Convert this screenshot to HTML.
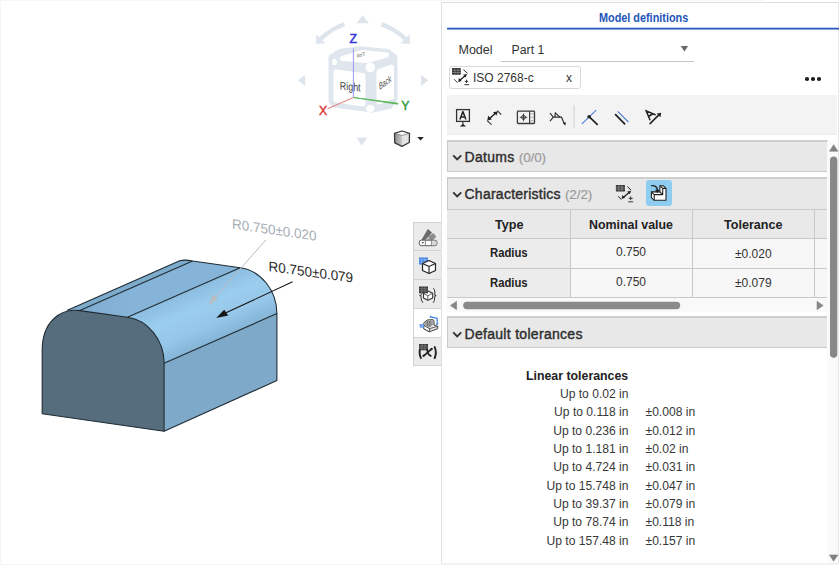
<!DOCTYPE html>
<html><head><meta charset="utf-8">
<style>
*{margin:0;padding:0;box-sizing:border-box}
html,body{width:839px;height:565px;overflow:hidden;background:#fff;font-family:"Liberation Sans",sans-serif;color:#333}
.abs{position:absolute}
#panel{position:absolute;left:441px;top:2px;width:398px;height:563px;border-left:1px solid #e0e0e0;border-top:1px solid #dedede;border-right:1px solid #e8e8e8;background:#fff}
.t{position:absolute;white-space:nowrap;line-height:1}
.hdr{position:absolute;left:447px;width:381px;background:#e8e8e8;border:1px solid #c9c9c9;border-top:2px solid #cecece}
.col{position:absolute;background:#c9c9c9;width:1px}
.row{position:absolute;background:#c9c9c9;height:1px}
.hd{font-size:14px;color:#2e2e2e;-webkit-text-stroke:0.4px #2e2e2e}
.cnt{color:#9a9a9a;-webkit-text-stroke:0.15px #9a9a9a;letter-spacing:-0.1px;font-size:13.5px}
</style></head><body>

<div class="abs" style="left:0;top:0;width:763px;height:1px;background:#f6f6f6"></div>
<div class="abs" style="left:0;top:0;width:1px;height:565px;background:#f6f6f6"></div>
<div class="abs" style="left:0;top:564px;width:441px;height:1px;background:#f6f6f6"></div>
<!-- viewport: 3D model -->
<svg class="abs" style="left:0;top:0" width="440" height="565" viewBox="0 0 440 565">
  <defs>
    <linearGradient id="gf" gradientUnits="userSpaceOnUse" x1="127.4" y1="317.3" x2="150.3" y2="369.3">
      <stop offset="0" stop-color="#8cbde1"/>
      <stop offset="0.35" stop-color="#9bcdee"/>
      <stop offset="0.7" stop-color="#96c7e9"/>
      <stop offset="1" stop-color="#84b4d6"/>
    </linearGradient>
    <linearGradient id="gt" gradientUnits="userSpaceOnUse" x1="79.8" y1="310.6" x2="127.4" y2="317.3">
      <stop offset="0" stop-color="#7eaacd"/>
      <stop offset="1" stop-color="#86b4d8"/>
    </linearGradient>
  </defs>
  <!-- right side face -->
  <polygon points="164.1,363.2 276.9,313.6 276.9,380.5 164.1,431.3" fill="#7fa9c8"/>
  <!-- left fillet strip -->
  <path d="M66.9,310.4 L179.7,260.8 Q185,259.3 192.6,261 L79.8,310.6 Z" fill="#7dabcc"/>
  <!-- flat top -->
  <path d="M79.8,310.6 L192.6,261 L240.2,267.7 L127.4,317.3 Z" fill="url(#gt)"/>
  <!-- right fillet -->
  <path d="M127.4,317.3 L240.2,267.7 C260.8,270.5 276.9,290.4 276.9,313.6 L164.1,363.2 C164.1,340 148,320 127.4,317.3 Z" fill="url(#gf)"/>
  <!-- front face -->
  <path d="M42.2,413.8 L164.1,431.3 L164.1,363.2 C164.1,340 148,320 127.4,317.3 L79.8,310.6 C60,308 42.2,322 42.2,350 Z" fill="#566d7d"/>
  <!-- edges -->
  <g stroke="#1f2b33" stroke-width="1.1" fill="none" stroke-linejoin="round">
    <path d="M42.2,413.8 L164.1,431.3 L164.1,363.2 C164.1,340 148,320 127.4,317.3 L79.8,310.6 C60,308 42.2,322 42.2,350 Z"/>
    <path d="M164.1,431.3 L276.9,380.5 L276.9,313.6 L164.1,363.2"/>
    <path d="M66.9,310.4 L179.7,260.8 Q185,259.3 192.6,261 L240.2,267.7 C260.8,270.5 276.9,290.4 276.9,313.6"/>
    <line x1="79.8" y1="310.6" x2="192.6" y2="261"/>
    <line x1="127.4" y1="317.3" x2="240.2" y2="267.7"/>
  </g>
  <!-- dimension annotations -->
  <line x1="265.9" y1="240" x2="215.3" y2="296.8" stroke="#b9bcbf" stroke-width="1"/>
  <polygon points="208.1,305.5 213,294.6 218,298.8" fill="#b9bcbf"/>
  <line x1="292.6" y1="281.8" x2="226" y2="312.8" stroke="#151515" stroke-width="1.1"/>
  <polygon points="216.2,317.9 224.2,309.8 228.2,315.6" fill="#151515"/>
  <text x="0" y="0" transform="translate(232 228.6) skewY(8.2)" font-family="Liberation Sans" font-size="13.8" fill="#a6aeb6" textLength="84.5" lengthAdjust="spacingAndGlyphs">R0.750±0.020</text>
  <text x="0" y="0" transform="translate(268.6 271) skewY(7.8)" font-family="Liberation Sans" font-size="13.8" fill="#2a2a2a" textLength="84.5" lengthAdjust="spacingAndGlyphs">R0.750±0.079</text>
</svg>

<!-- view cube -->
<svg class="abs" style="left:290px;top:5px" width="150" height="150" viewBox="290 5 150 150">
  <g fill="#dde4eb" stroke="none">
    <polygon points="362.7,15.2 356.5,23.3 368.9,23.3"/>
    <polygon points="298,80.2 305.2,75 305.2,86"/>
    <polygon points="428.3,80.2 421,75 421,86"/>
    <polygon points="361.7,145.5 356.3,137.5 367.5,137.5"/>
    <polygon points="316,43.8 316.4,34.5 325.5,43.4"/>
    <polygon points="410,43.8 409.6,34.5 400.5,43.4"/>
  </g>
  <path d="M344.5,24.3 Q331,29 320.5,39" fill="none" stroke="#dde4eb" stroke-width="4.2"/>
  <path d="M381.5,24.3 Q395,29 405.5,39" fill="none" stroke="#dde4eb" stroke-width="4.2"/>
  <!-- cube body -->
  <polygon points="331.5,57 340,52 359.6,49.3 388,52 394.5,57.5 394.5,99 389.5,106 372.4,109.5 334,104.5 331.5,101" fill="#dfe6ed" stroke="#dfe6ed" stroke-width="6" stroke-linejoin="round"/>
  <!-- white panels -->
  <g fill="#fff" stroke="#fff" stroke-width="5" stroke-linejoin="round">
    <polygon points="336,72 363,75.5 363,104 336,100"/>
    <polygon points="379,71.5 391.5,67 391.5,97 379,102"/>
    <polygon points="342.5,58.5 362.5,52.5 386.5,55 367,60.5"/>
  </g>
  <ellipse cx="370.3" cy="67.5" rx="4.8" ry="5" fill="#fff"/>
  <ellipse cx="370.3" cy="108.5" rx="4.5" ry="3.5" fill="#fff"/>
  <ellipse cx="334.5" cy="62" rx="2.3" ry="3.2" fill="#fff"/>
  <text x="0" y="0" font-family="Liberation Sans" font-size="11.2" fill="#3c3c3c" transform="translate(339.8 89.4) skewY(6)" textLength="20.8" lengthAdjust="spacingAndGlyphs">Right</text>
  <text x="0" y="0" font-family="Liberation Sans" font-size="9.5" fill="#4a4a4a" transform="translate(379.5 90) matrix(0.85,-0.62,0.12,1,0,0)" textLength="14" lengthAdjust="spacingAndGlyphs">Back</text>
  <text x="0" y="0" font-family="Liberation Sans" font-size="5" fill="#666" transform="translate(357 57.5) rotate(-12)">doT</text>
  <!-- axes -->
  <line x1="353.4" y1="97.5" x2="353.4" y2="48.5" stroke="#9a9af0" stroke-width="1"/>
  <line x1="353.4" y1="97.5" x2="327.6" y2="108.7" stroke="#e58a8a" stroke-width="1.1"/>
  <path d="M353.4,97.5 L397.8,103.2 L397.8,104.2 Z" fill="#4aa84a" stroke="#5fb85f" stroke-width="0.9"/>
  <text x="349.4" y="43.4" font-family="Liberation Sans" font-size="12.3" fill="#3535d8" stroke="#3535d8" stroke-width="0.45">Z</text>
  <text x="319" y="114.8" font-family="Liberation Sans" font-size="12.3" fill="#d93636" stroke="#d93636" stroke-width="0.45">X</text>
  <text x="401.2" y="109.7" font-family="Liberation Sans" font-size="12.3" fill="#2c9c3a" stroke="#2c9c3a" stroke-width="0.45">Y</text>
  <!-- small cube icon -->
  <defs><linearGradient id="cl" x1="0" y1="0" x2="1" y2="0"><stop offset="0" stop-color="#8d8d8d"/><stop offset="1" stop-color="#c9c9c9"/></linearGradient></defs>
  <polygon points="394.5,133.3 402,135.5 402,146.3 394.7,142.8" fill="url(#cl)"/>
  <polygon points="402,135.5 409.5,133.3 409.3,142.5 402,146.3" fill="#e3e3e3"/>
  <polygon points="394.5,133.3 402,131 409.5,133.3 402,135.5" fill="#fafafa"/>
  <polygon points="394.5,133.3 402,131 409.5,133.3 409.3,142.5 402,146.3 394.7,142.8" fill="none" stroke="#3a3a3a" stroke-width="1.3" stroke-linejoin="round"/>
  <line x1="394.5" y1="133.3" x2="402" y2="135.5" stroke="#555" stroke-width="0.6"/>
  <line x1="409.5" y1="133.3" x2="402" y2="135.5" stroke="#555" stroke-width="0.6"/>
  <polygon points="417.2,137 423.8,137 420.5,140.5" fill="#222"/>
</svg>

<!-- side tool strip -->
<div class="abs" style="left:413px;top:222px;width:29px;height:144px;background:#ebebeb;border:1px solid #d2d2d2;border-right:none"></div>
<div class="abs" style="left:414px;top:309px;width:28px;height:28px;background:#fff"></div>
<div class="row" style="left:414px;top:250px;width:28px;background:#d2d2d2"></div>
<div class="row" style="left:414px;top:279px;width:28px;background:#d2d2d2"></div>
<div class="row" style="left:414px;top:308px;width:28px;background:#d2d2d2"></div>
<div class="row" style="left:414px;top:337px;width:28px;background:#d2d2d2"></div>
<svg class="abs" style="left:413px;top:222px" width="29" height="144" viewBox="0 0 29 144" stroke-linejoin="round">
  <!-- icon1: swatch fan -->
  <path d="M8.4,17.9 L14.8,7.1 L19,10.5 L12.8,17.9 Z" fill="#6a6a6a"/>
  <path d="M13.5,17.9 L16.6,13.6 L20.3,11.1 L23.4,14.8 L19.6,17.9 Z" fill="#8c8c8c"/>
  <path d="M11.6,17.9 L15.6,14.6 L17,17.9 Z" fill="#bdbdbd"/>
  <rect x="6.3" y="18.2" width="17.6" height="5.5" rx="2" fill="#fff" stroke="#5a5a5a" stroke-width="1"/>
  <line x1="12.4" y1="18.2" x2="12.4" y2="23.7" stroke="#777" stroke-width="0.9"/>
  <line x1="18.4" y1="18.2" x2="18.4" y2="23.7" stroke="#777" stroke-width="0.9"/>
  <rect x="18.9" y="18.8" width="4.4" height="4.4" fill="#d8d8d8"/>
  <polygon points="8.5,19.9 11.1,19.9 9.8,21.8" fill="#555"/>
  <!-- icon2: grid + cube -->
  <g transform="translate(0,29)">
    <rect x="6" y="6.5" width="9" height="7" fill="#3f7fe0"/>
    <path d="M6,8.8 H15 M6,11.2 H15 M9,6.5 V13.5 M12,6.5 V13.5" stroke="#9cc0f5" stroke-width="0.7"/>
    <path d="M9.5,12.5 L16,9.5 L22.5,12.5 L22.5,19.5 L16,22.5 L9.5,19.5 Z" fill="#fff" stroke="#222" stroke-width="1.2"/>
    <path d="M9.5,12.5 L16,15.5 L22.5,12.5 M16,15.5 V22.5" fill="none" stroke="#222" stroke-width="1.1"/>
  </g>
  <!-- icon3: grid + cube in braces -->
  <g transform="translate(0,58)">
    <path d="M10.5,13.5 L15,11 L19.7,13.2 L19.7,17.9 L14.8,20.3 L10.5,18.1 Z" fill="#fff" stroke="#333" stroke-width="1.1" stroke-linejoin="round"/>
    <path d="M10.5,13.5 L14.8,15.8 L19.7,13.2 M14.8,15.8 V20.3" fill="none" stroke="#555" stroke-width="0.9"/>
    <rect x="6" y="6.5" width="9" height="6.8" fill="#3a3a3a"/>
    <path d="M6,8.8 H15 M6,11 H15 M9,6.5 V13.3 M12,6.5 V13.3" stroke="#fff" stroke-width="0.45" opacity="0.55"/>
    <path d="M9.4,13.6 Q8,13.8 8,15 L7.9,15.4 L6.6,15.6 L7.9,15.8 Q8,21 9.8,22.8" fill="none" stroke="#333" stroke-width="1"/>
    <path d="M20.2,8.2 Q21.7,8.8 21.8,12 L21.9,15.3 L23.2,15.6 L21.9,15.9 Q21.8,21.6 20.2,22.8" fill="none" stroke="#333" stroke-width="1"/>
  </g>
  <!-- icon4: step part with blue markers (selected) -->
  <g transform="translate(0,87)">
    <polygon points="10.8,13.8 14.2,11 19.8,10.6 21,11.6 21,16.1 24.7,17.3 24.7,19.8 16.4,22.8 10.8,19.8" fill="#d8d8d8" stroke="#333" stroke-width="0.9"/>
    <polygon points="12.2,13.6 14.6,11.6 19.8,11.6 19.8,16.6 16.2,18.4 12.2,16.6" fill="#9a9a9a"/>
    <path d="M14.5,12 V17.2 M16.8,12 V17.8" stroke="#666" stroke-width="0.7"/>
    <polygon points="16.2,18.4 19.8,16.6 24.2,17.8 20.6,19.8" fill="#f4f4f4"/>
    <polygon points="10.8,16.4 16.4,19.6 16.4,22.8 10.8,19.8" fill="#fff" stroke="#333" stroke-width="0.8"/>
    <path d="M16.4,19.6 L24.7,17.3" stroke="#333" stroke-width="0.8"/>
    <polyline points="17.6,7.8 24.2,9.4 24.2,15.2" fill="none" stroke="#3f7fe0" stroke-width="1.2"/>
    <path d="M17.4,6.6 V9 M23,15.2 H25.4" stroke="#3f7fe0" stroke-width="1"/>
    <rect x="6.7" y="15" width="4.4" height="3.6" fill="#5a8fe6"/>
    <path d="M6.7,16.8 H11.1 M8.9,15 V18.6" stroke="#a9c6f5" stroke-width="0.6"/>
  </g>
  <!-- icon5: grid + (x) -->
  <g transform="translate(0,116)">
    <rect x="6" y="6" width="9" height="6.3" fill="#3a3a3a"/>
    <path d="M6,8.1 H15 M6,10.2 H15 M9,6 V12.3 M12,6 V12.3" stroke="#fff" stroke-width="0.45" opacity="0.55"/>
    <path d="M6.8,11.5 Q6,17 8.4,20.8" fill="none" stroke="#222" stroke-width="1.9"/>
    <path d="M21.4,8.4 Q24.3,14.6 21.4,20.8" fill="none" stroke="#222" stroke-width="1.9"/>
    <path d="M18.4,11.2 L11,17.6" fill="none" stroke="#222" stroke-width="1.7"/>
    <path d="M14.2,10.8 Q14.2,17.2 18.4,18.2" fill="none" stroke="#222" stroke-width="1.8"/>
    <ellipse cx="18.4" cy="11.2" rx="1.6" ry="1.1" transform="rotate(-35 18.4 11.2)" fill="#222"/>
    <ellipse cx="10.8" cy="17.6" rx="1.6" ry="1.1" transform="rotate(-35 10.8 17.6)" fill="#222"/>
  </g>
</svg>

<!-- panel -->
<div id="panel"></div>
<div class="t" style="left:599px;top:11.5px;font-size:12.2px;font-weight:bold;color:#1d55b8;transform:scaleX(0.89);transform-origin:0 0">Model definitions</div>
<svg class="abs" style="left:447px;top:26px" width="392" height="5"><line x1="0" y1="2.6" x2="392" y2="2.6" stroke="#2457bd" stroke-width="1.7"/></svg>

<div class="t" style="left:458.5px;top:44px;font-size:12.5px;color:#333">Model</div>
<div class="t" style="left:511.5px;top:44.2px;font-size:12.3px;color:#333">Part 1</div>
<div class="abs" style="left:501px;top:60.5px;width:192.5px;height:1.2px;background:#c4c4c4"></div>
<svg class="abs" style="left:678px;top:44px" width="12" height="10" viewBox="678 44 12 10"><polygon points="680.8,46.1 688.1,46.1 684.45,51.4" fill="#666"/></svg>

<div class="abs" style="left:449px;top:66px;width:132px;height:23px;border:1px solid #d9d9d9;border-radius:3px"></div>
<svg class="abs" style="left:447px;top:64px" width="26" height="26" viewBox="447 64 26 26" fill="none" stroke="#222">
  <rect x="452" y="68.1" width="8.8" height="6.6" rx="0.6" fill="#333" stroke="none"/>
  <path d="M452,70.3 H460.8 M452,72.5 H460.8 M454.9,68.1 V74.7 M457.9,68.1 V74.7" stroke="#aaa" stroke-width="0.5"/>
  <line x1="459.6" y1="80.5" x2="465.4" y2="75.4" stroke-width="1.3"/>
  <polygon points="458.2,81.9 458.9,78.1 461.7,80.9" fill="#222" stroke="none"/>
  <polygon points="466.9,74 463.1,74.8 465.8,77.5" fill="#222" stroke="none"/>
  <line x1="463.4" y1="69.7" x2="467.7" y2="73.5" stroke-width="0.9"/>
  <line x1="454.1" y1="79.3" x2="457.7" y2="82.8" stroke-width="0.9"/>
  <path d="M464.8,81.4 H468.2 M466.5,79.7 V83 M464.4,84.7 H469.2" stroke-width="0.9"/>
</svg>
<div class="t" style="left:473px;top:72px;font-size:12px;color:#333">ISO 2768-c</div>
<div class="t" style="left:566px;top:72px;font-size:12px;color:#333">x</div>
<div class="abs" style="left:805px;top:77px;width:3.5px;height:3.5px;border-radius:50%;background:#222"></div>
<div class="abs" style="left:811px;top:77px;width:3.5px;height:3.5px;border-radius:50%;background:#222"></div>
<div class="abs" style="left:817px;top:77px;width:3.5px;height:3.5px;border-radius:50%;background:#222"></div>

<!-- toolbar -->
<div class="abs" style="left:447px;top:95px;width:390px;height:39px;background:#f3f3f3;box-shadow:0 1px 0 #ececec"></div>
<svg class="abs" style="left:446px;top:95px" width="240" height="39" viewBox="0 0 240 39" fill="none" stroke="#333" stroke-width="1.2">
  <!-- icon1: annotation A -->
  <rect x="10.6" y="14.6" width="12.8" height="11.8" stroke-width="1.3"/>
  <path d="M13.9,24.6 L16.9,16.6 L19.9,24.6 M14.9,22 H18.9" stroke="#222" stroke-width="1.5" stroke-linejoin="round"/>
  <line x1="16.9" y1="26.5" x2="16.9" y2="29.5" stroke-width="1.1"/>
  <polygon points="13.8,31.5 16.9,28.8 20,31.5" fill="#222" stroke="none"/>
  <!-- icon2: dimension arrow -->
  <line x1="43" y1="24" x2="50" y2="17.8" stroke="#222" stroke-width="1.5"/>
  <polygon points="41.3,25.6 42.2,20.8 45.8,24.4" fill="#222" stroke="none"/>
  <polygon points="51.8,16.2 47,17.2 50.6,20.6" fill="#222" stroke="none"/>
  <line x1="41" y1="25.6" x2="45.6" y2="29.6" stroke-width="1.1"/>
  <line x1="51.4" y1="15.6" x2="55.2" y2="19.6" stroke-width="1.1"/>
  <!-- icon3: GD&T frame -->
  <rect x="71.4" y="16.2" width="17.1" height="12.3" rx="0.8" stroke="#3a3a3a" stroke-width="1.3"/>
  <line x1="83.6" y1="16.2" x2="83.6" y2="28.5" stroke="#3a3a3a" stroke-width="1.2"/>
  <polygon points="77.5,18 78.6,21.2 81.8,22.3 78.6,23.4 77.5,26.8 76.4,23.4 73.2,22.3 76.4,21.2" fill="#333" stroke="none"/>
  <circle cx="77.5" cy="22.3" r="1.9" fill="#fff" stroke="#333" stroke-width="0.9"/>
  <path d="M75.6,22.3 H79.4 M77.5,20.4 V24.2" stroke="#333" stroke-width="0.9"/>
  <path d="M84.5,18.9 H87.8 M84.5,22.3 H87.8 M84.5,25.7 H87.8" stroke="#999" stroke-width="0.8"/>
  <!-- icon4: weld/leader -->
  <polyline points="104,18.2 107.3,22.2 104,26.1" stroke-width="1.2"/>
  <polyline points="107.3,22.2 115.5,22.2 118.2,28.5" stroke-width="1.2"/>
  <polyline points="108.8,22.2 109.4,17.9 114,22.2" stroke-width="1.2"/>
  <polygon points="117,28 120,27.2 119.2,30.8" fill="#222" stroke="none"/>
  <!-- separator -->
  <line x1="128" y1="10.4" x2="128" y2="33.6" stroke="#d0d0d0" stroke-width="1"/>
  <!-- icon5: perpendicular -->
  <line x1="135.9" y1="28.8" x2="150.2" y2="15.1" stroke="#4a7bd4" stroke-width="1.1"/>
  <line x1="143.1" y1="21.7" x2="151.7" y2="29.8" stroke="#222" stroke-width="1.7"/>
  <circle cx="143.1" cy="21.7" r="1.8" fill="#222" stroke="none"/>
  <!-- icon6: parallel -->
  <line x1="171.7" y1="16.3" x2="182.4" y2="27" stroke="#4a7bd4" stroke-width="1.1"/>
  <line x1="169.1" y1="19.1" x2="179.1" y2="29.4" stroke="#222" stroke-width="1.7"/>
  <!-- icon7: angle A -->
  <path d="M209.2,19.8 L200.2,15.9 L203.9,24.7 M202.6,21.5 L206.4,19" stroke="#222" stroke-width="1.5" stroke-linejoin="miter" stroke-linecap="round"/>
  <line x1="204.1" y1="28.6" x2="212.6" y2="20.1" stroke="#222" stroke-width="1.5" stroke-linecap="round"/>
  <polygon points="215.2,17.8 210.8,18.6 214.4,22.2" fill="#222" stroke="none"/>
</svg>

<!-- sections -->
<div class="hdr" style="top:140px;height:32px"></div>
<svg class="abs" style="left:452px;top:154px" width="11" height="8" viewBox="0 0 11 8"><polyline points="1.2,1.4 5.2,5.4 9.2,1.4" fill="none" stroke="#333" stroke-width="1.9"/></svg>
<div class="t hd" style="left:464.5px;top:149.5px;letter-spacing:0.3px">Datums <span class="cnt">(0/0)</span></div>

<div class="hdr" style="top:177px;height:122px;background:#e8e8e8"></div>
<svg class="abs" style="left:452px;top:190.5px" width="11" height="8" viewBox="0 0 11 8"><polyline points="1.2,1.4 5.2,5.4 9.2,1.4" fill="none" stroke="#333" stroke-width="1.9"/></svg>
<div class="t hd" style="left:464.5px;top:186.5px;letter-spacing:0.25px">Characteristics <span class="cnt">(2/2)</span></div>
<!-- header icons -->
<svg class="abs" style="left:608px;top:176px" width="30" height="30" viewBox="608 176 30 30" fill="none" stroke="#222">
  <rect x="615.9" y="184.9" width="9.1" height="6.5" rx="0.6" fill="#333" stroke="none"/>
  <path d="M615.9,187.1 H625 M615.9,189.2 H625 M618.9,184.9 V191.4 M621.9,184.9 V191.4" stroke="#bbb" stroke-width="0.5"/>
  <line x1="623.2" y1="197.4" x2="629.4" y2="192.3" stroke-width="1.3"/>
  <polygon points="621.6,198.9 622.3,195 625,197.8" fill="#222" stroke="none"/>
  <polygon points="631,190.8 627.2,191.6 629.8,194.3" fill="#222" stroke="none"/>
  <line x1="627.4" y1="186.5" x2="631.1" y2="190.2" stroke-width="1"/>
  <line x1="618.1" y1="196.3" x2="621.4" y2="199.5" stroke-width="1"/>
  <path d="M628.7,198.3 H632.7 M630.7,196.4 V200.1 M628.3,201.8 H633.1" stroke-width="0.9"/>
</svg>
<div class="abs" style="left:646px;top:179.6px;width:25.6px;height:26.4px;background:#8fcdf0;border-radius:3px"></div>
<svg class="abs" style="left:646px;top:180px" width="26" height="26" viewBox="0 0 26 26" fill="#fff" stroke="#222" stroke-width="1.1" stroke-linejoin="round">
  <path d="M5.4,11.9 L13.9,11.9 L13.9,5.7 L17.2,5.7 L20,8.4 L20,20.3 L8.2,20.3 L5.4,17.6 Z"/>
  <path d="M5.4,11.9 L8.2,14.6 L16.7,14.6 L16.7,8.4 L20,8.4 M16.7,8.4 L13.9,5.7 M8.2,14.6 L8.2,20.3 M13.9,11.9 L16.7,14.6" fill="none"/>
  <path d="M5.2,5.8 C8.5,5.2 11.2,6.5 11.4,10.2" fill="none" stroke-width="1.4"/>
  <polygon points="9,9.8 13.8,9.8 11.3,13" fill="#222" stroke="none"/>
</svg>

<!-- table -->
<div class="abs" style="left:447px;top:209px;width:381px;height:89px;background:#f7f7f7"></div>
<div class="abs" style="left:447px;top:209px;width:381px;height:30px;background:#e9e9e9"></div>
<div class="abs" style="left:447px;top:239px;width:123px;height:59px;background:#ececec"></div>
<div class="row" style="left:447px;top:209px;width:381px"></div>
<div class="row" style="left:447px;top:238px;width:381px"></div>
<div class="row" style="left:447px;top:268px;width:381px"></div>
<div class="row" style="left:447px;top:297px;width:381px"></div>
<div class="col" style="left:570px;top:209px;height:89px"></div>
<div class="col" style="left:692px;top:209px;height:89px"></div>
<div class="col" style="left:814px;top:209px;height:89px"></div>
<div class="t" style="left:495px;top:219px;font-size:12.6px;font-weight:bold;color:#222">Type</div>
<div class="t" style="left:589px;top:219px;font-size:12.4px;font-weight:bold;color:#222">Nominal value</div>
<div class="t" style="left:724px;top:219px;font-size:12.6px;font-weight:bold;color:#222">Tolerance</div>
<div class="t" style="left:489.5px;top:247px;font-size:12px;font-weight:bold;color:#222;transform:scaleX(0.94);transform-origin:0 0">Radius</div>
<div class="t" style="left:489.5px;top:276.5px;font-size:12px;font-weight:bold;color:#222;transform:scaleX(0.94);transform-origin:0 0">Radius</div>
<div class="t" style="left:616px;top:246px;font-size:12px;color:#333">0.750</div>
<div class="t" style="left:616px;top:276px;font-size:12px;color:#333">0.750</div>
<div class="t" style="left:735px;top:248px;font-size:12px;color:#333">±0.020</div>
<div class="t" style="left:735px;top:277px;font-size:12px;color:#333">±0.079</div>
<!-- horizontal scrollbar -->
<div class="abs" style="left:447px;top:298px;width:380px;height:14px;background:#f9f9f9"></div>
<svg class="abs" style="left:447px;top:298px" width="380" height="14" viewBox="447 298 380 14">
  <polygon points="450.4,305.5 456.6,301.3 456.6,309.7" fill="#878787" stroke="#878787" stroke-width="0.6" stroke-linejoin="round"/>
  <rect x="463.2" y="301.8" width="217" height="7.4" rx="3.7" fill="#8a8a8a"/>
  <polygon points="823.2,305.5 817,301.3 817,309.7" fill="#878787" stroke="#878787" stroke-width="0.6" stroke-linejoin="round"/>
</svg>

<div class="hdr" style="top:316px;height:32px"></div>
<svg class="abs" style="left:452px;top:330.5px" width="11" height="8" viewBox="0 0 11 8"><polyline points="1.2,1.4 5.2,5.4 9.2,1.4" fill="none" stroke="#333" stroke-width="1.9"/></svg>
<div class="t hd" style="left:464.5px;top:326.5px;letter-spacing:0.3px">Default tolerances</div>

<!-- vertical scrollbar -->
<div class="abs" style="left:827px;top:141px;width:11px;height:423px;background:#fafafa"></div>
<svg class="abs" style="left:827px;top:141px" width="12" height="424" viewBox="827 141 12 424">
  <polygon points="833.7,144.8 829.5,151.2 837.9,151.2" fill="#808080" stroke="#808080" stroke-width="0.6" stroke-linejoin="round"/>
  <rect x="830" y="156.5" width="7.3" height="201.2" rx="3.65" fill="#888"/>
  <polygon points="833.6,561.2 829.5,555 837.8,555" fill="#808080" stroke="#808080" stroke-width="0.6" stroke-linejoin="round"/>
</svg>
<div class="abs" style="left:441px;top:563px;width:398px;height:2px;background:#f2f2f2"></div>

<!-- tolerances list -->
<div class="t" style="left:525.5px;top:369.5px;font-size:12.6px;font-weight:bold;color:#222;transform:scaleX(0.98);transform-origin:0 0">Linear tolerances</div>
<div class="abs" id="tl" style="left:0;top:0;width:839px;height:565px;font-size:12.1px;color:#383838">
  <div class="t" style="right:210.5px;top:387.80px">Up to 0.02 in</div>
  <div class="t" style="right:210.5px;top:406.18px">Up to 0.118 in</div><div class="t" style="left:645.5px;top:406.18px">±0.008 in</div>
  <div class="t" style="right:210.5px;top:424.55px">Up to 0.236 in</div><div class="t" style="left:645.5px;top:424.55px">±0.012 in</div>
  <div class="t" style="right:210.5px;top:442.93px">Up to 1.181 in</div><div class="t" style="left:645.5px;top:442.93px">±0.02 in</div>
  <div class="t" style="right:210.5px;top:461.30px">Up to 4.724 in</div><div class="t" style="left:645.5px;top:461.30px">±0.031 in</div>
  <div class="t" style="right:210.5px;top:479.68px">Up to 15.748 in</div><div class="t" style="left:645.5px;top:479.68px">±0.047 in</div>
  <div class="t" style="right:210.5px;top:498.05px">Up to 39.37 in</div><div class="t" style="left:645.5px;top:498.05px">±0.079 in</div>
  <div class="t" style="right:210.5px;top:516.43px">Up to 78.74 in</div><div class="t" style="left:645.5px;top:516.43px">±0.118 in</div>
  <div class="t" style="right:210.5px;top:534.80px">Up to 157.48 in</div><div class="t" style="left:645.5px;top:534.80px">±0.157 in</div>
</div>

</body></html>
